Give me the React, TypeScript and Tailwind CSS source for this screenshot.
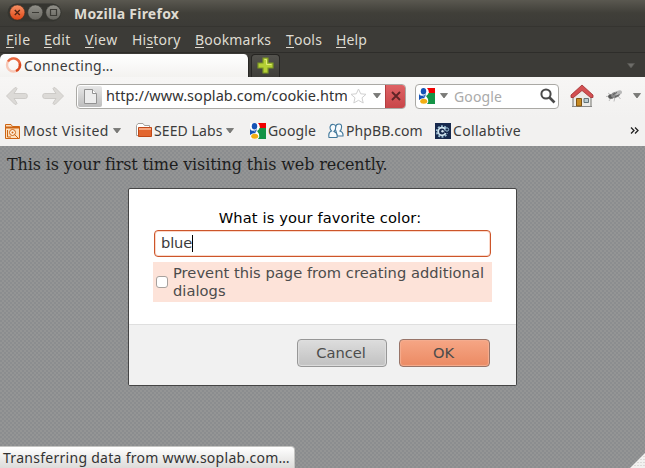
import React from "react";

const UI = "font-['Noto_Sans','Open_Sans',sans-serif]";

function Caret({ className = "", color = "#7b7b79" }: { className?: string; color?: string }) {
  return (
    <svg className={`shrink-0 ${className}`} width="8" height="6" viewBox="0 0 8 6">
      <path d="M0.5 0.5H7.5L4 5Z" fill={color} stroke="#5a5a58" strokeWidth="0.6" />
    </svg>
  );
}

function GoogleIcon({ className = "" }: { className?: string }) {
  return (
    <svg className={`shrink-0 ${className}`} width="16" height="16" viewBox="0 0 16 16">
      <path d="M0 0H16V16H0Z" fill="#fff" />
      <path d="M8 0H16V5H10Q10 2 8 0Z" fill="#f00000" />
      <path d="M16 5V16H8Q10 14 9 11L7 8Q9 7 9.500 5Z" fill="#159447" />
      <path d="M0 5Q0 8 4 8L6 10Q2 10 0 12Z" fill="#1553b5" />
      <ellipse cx="4.500" cy="3.300" rx="2.700" ry="3.200" fill="#1553b5" />
      <path d="M1 7Q5 9 7 6L6 9Z" fill="#1553b5" />
      <ellipse cx="4.700" cy="13.300" rx="3.500" ry="2.500" fill="#f2ae13" />
    </svg>
  );
}

function WindowButtons() {
  return (
    <svg className="shrink-0" width="56" height="22" viewBox="0 0 56 22">
      <defs>
        <linearGradient id="close" x2="0" y2="1">
          <stop stopColor="#f79266" />
          <stop offset="1" stopColor="#df4615" />
        </linearGradient>
        <linearGradient id="grey" x2="0" y2="1">
          <stop stopColor="#92918a" />
          <stop offset="1" stopColor="#66655f" />
        </linearGradient>
      </defs>
      <rect x="0.500" y="1.500" width="54" height="18" rx="9" fill="#353530" />
      <circle cx="10.300" cy="10.500" r="7.500" fill="url(#close)" stroke="#4b2a1c" strokeWidth="0.500" />
      <circle cx="28.300" cy="10.500" r="7.500" fill="url(#grey)" stroke="#30302c" strokeWidth="0.500" />
      <circle cx="46.300" cy="10.500" r="7.500" fill="url(#grey)" stroke="#30302c" strokeWidth="0.500" />
      <path d="M7.800 8L12.800 13M12.800 8L7.800 13" stroke="#512413" strokeWidth="1.400" />
      <path d="M25 10.500H32M43.500 7.500H49.500V13.500H43.500Z" fill="none" stroke="#3b3a35" strokeWidth="1.200" />
    </svg>
  );
}

function MenuItem({ pre = "", k, post, className }: { pre?: string; k: string; post: string; className: string }) {
  return (
    <span className={`shrink-0 whitespace-nowrap ${className}`}>
      {pre}
      <span className="inline-block border-b border-[#dfdbd2] leading-[15px]">{k}</span>
      {post}
    </span>
  );
}

function BackArrow({ className = "" }: { className?: string }) {
  return (
    <svg className={`shrink-0 ${className}`} width="24" height="20" viewBox="0 0 24 20">
      <path
        d="M1.500 10L9.500 2Q11.500 0.800 12 2.500Q12 3.200 9 7.500H20.500Q22.300 7.500 22.300 10Q22.300 12.500 20.500 12.500H9Q12 16.800 12 17.500Q11.500 19.200 9.500 18Z"
        fill="#dcdad7" stroke="#c9c7c4" strokeWidth="0.900"
      />
    </svg>
  );
}

function HomeIcon() {
  return (
    <svg className="ml-[11px] shrink-0" width="24" height="24" viewBox="0 0 24 24">
      <path d="M3 10L12 3L21 10V22.500H3Z" fill="#ecebe8" stroke="#75756f" />
      <path d="M2 22.500H22" stroke="#888" />
      <path d="M6.500 14.500H11.500V22H6.500Z" fill="#c68a22" stroke="#805414" />
      <path d="M14 14.500H18.500V18.500H14Z" fill="#b9cad0" stroke="#63747a" />
      <path d="M12 1L23 11V13.500H20.500L12 6.500L3.500 13.500H1V11Z" fill="#d35052" stroke="#a02f31" strokeWidth="0.800" />
    </svg>
  );
}

function FlyIcon() {
  return (
    <svg className="ml-[12px] shrink-0" width="18" height="16" viewBox="0 0 18 16">
      <path d="M2 5L6 8M0 8.500L6 8M6 8L3 13M9 9L8 13.500M12 8L14.500 11" stroke="#a5a5a5" fill="none" strokeWidth="0.700" />
      <ellipse cx="5" cy="8.500" rx="2.800" ry="2.300" fill="#5a5a5a" />
      <ellipse cx="9.500" cy="6.800" rx="4.500" ry="3" transform="rotate(-20 9.500 6.800)" fill="#8a8a8a" />
      <ellipse cx="12.500" cy="4.800" rx="3.600" ry="2.300" transform="rotate(-20 12.500 4.800)" fill="#b8b8b8" />
      <path d="M7 6.500L11 4.500M9 9L13.500 6.500" stroke="#555" strokeWidth="0.900" />
    </svg>
  );
}

function Chrome() {
  return (
    <header className={`shrink-0 ${UI}`}>
      <div className="flex h-[26px] items-center bg-linear-to-b from-[#5a5850] via-[#403f39] to-[#3c3b37] pl-[7px]">
        <WindowButtons />
        <span className="ml-[11px] text-[14px] font-bold tracking-[0.250px] whitespace-nowrap text-[#dfdbd2]">Mozilla Firefox</span>
      </div>
      <nav className="flex h-[26px] items-center border-t border-[#353430] bg-[#3c3b37] pl-[6px] text-[14px] leading-[20px] tracking-[0.200px] text-[#dfdbd2]">
        <MenuItem k="F" post="ile" className="w-[38px] tracking-[0.600px]" />
        <MenuItem k="E" post="dit" className="w-[41px] tracking-[0.400px]" />
        <MenuItem k="V" post="iew" className="w-[47px] tracking-[0.500px]" />
        <MenuItem pre="Hi" k="s" post="tory" className="w-[63px] tracking-[0.200px]" />
        <MenuItem k="B" post="ookmarks" className="w-[91px]" />
        <MenuItem k="T" post="ools" className="w-[50px]" />
        <MenuItem k="H" post="elp" className="w-[40px] tracking-[0.100px]" />
      </nav>
      <div className="flex h-[25px] border-t border-[#2e2d2a] bg-[#3c3b37]">
        <div className="mt-[1px] flex w-[249px] items-center rounded-t-[5px] border-r border-[#292825] bg-linear-to-b from-white to-[#f3f2f0] pl-[5px]">
          <svg className="shrink-0" width="17" height="17" viewBox="0 0 17 17">
            <circle cx="8.500" cy="8" r="6.500" fill="none" stroke="#f8c8b7" strokeWidth="2.400" />
            <path d="M3 4.500A6.500 6.500 0 0 1 14.500 10.500" fill="none" stroke="#e9683f" strokeWidth="2.400" />
            <path d="M14.800 6.500A6.500 6.500 0 0 1 11 14" fill="none" stroke="#d9481f" strokeWidth="2.400" />
          </svg>
          <span className="ml-[2px] text-[14px] tracking-[0.280px] text-[#3c3c3c]">Connecting…</span>
        </div>
        <div className="mt-[1px] ml-[2px] flex w-[29px] items-center justify-center rounded-t-[4px] border border-b-0 border-[#262522] bg-linear-to-b from-[#54534e] to-[#3f3e39]">
          <svg className="mb-[2px]" width="17" height="17" viewBox="0 0 17 17">
            <path d="M6 1H11V6H16V11H11V16H6V11H1V6H6Z" fill="#b5cf35" stroke="#7b9625" strokeWidth="1.200" />
            <path d="M7.500 2.500H9.500V7.500H14.500" fill="none" stroke="#e0ec79" />
          </svg>
        </div>
        <Caret className="mt-[10px] mr-[10px] ml-auto" color="#6e6d69" />
      </div>
      <div className="flex h-[40px] items-center bg-linear-to-b from-[#f7f6f5] to-[#f2f1f0] pb-[2px] pl-[5px]">
        <BackArrow />
        <BackArrow className="ml-[12px] -scale-x-100" />
        <div className="ml-[11px] flex h-[25px] w-[330px] shrink-0 items-center overflow-hidden rounded-[4px] border border-[#aaa9a5] bg-white">
          <div className="ml-[1px] flex h-[21px] w-[24px] shrink-0 items-center justify-center rounded-[2px] bg-linear-to-b from-[#e7e7e7] to-[#bdbdbd]">
            <svg width="15" height="17" viewBox="0 0 15 17">
              <path d="M1.500 1.500H9.500L13.500 5.500V15.500H1.500Z" fill="#ececec" stroke="#929292" />
              <path d="M9.500 1.500V5.500H13.500" fill="#fff" stroke="#929292" />
            </svg>
          </div>
          <span className="ml-[4px] w-[241px] shrink-0 overflow-hidden text-[14.500px] tracking-[0.050px] whitespace-nowrap text-[#333]">http://www.soplab.com/cookie.htm</span>
          <svg className="ml-[3px] shrink-0" width="17" height="16" viewBox="0 0 17 16">
            <path d="M8.500 1L10.700 5.800L16 6.300L12 9.800L13.200 15L8.500 12.300L3.800 15L5 9.800L1 6.300L6.300 5.800Z" fill="#fff" stroke="#cfcfcf" strokeLinejoin="round" />
          </svg>
          <Caret className="ml-[6px]" />
          <div className="ml-auto flex h-[25px] w-[20px] shrink-0 items-center justify-center border-l border-[#b33e41] bg-linear-to-b from-[#e06366] to-[#c74548]">
            <svg width="10" height="10" viewBox="0 0 10 10">
              <path d="M1 1L9 9M9 1L1 9" stroke="#612426" strokeWidth="1.900" />
            </svg>
          </div>
        </div>
        <div className="ml-[9px] flex h-[25px] w-[144px] shrink-0 items-center rounded-[4px] border border-[#aaa9a5] bg-white pl-[3px]">
          <GoogleIcon />
          <Caret className="ml-[5px]" />
          <span className="ml-[6px] text-[14px] tracking-[0.150px] text-[#aaa]">Google</span>
          <svg className="mr-[2px] ml-auto" width="16" height="16" viewBox="0 0 16 16">
            <circle cx="6" cy="6" r="4.600" fill="none" stroke="#4a4a4a" strokeWidth="2" />
            <path d="M9.500 9.500L14.500 14.500" stroke="#4a4a4a" strokeWidth="2.600" />
          </svg>
        </div>
        <HomeIcon />
        <FlyIcon />
        <Caret className="ml-[9px]" />
      </div>
      <div className="flex h-[29px] items-center bg-[#f2f1f0] pb-[2px] pl-[5px] text-[14px] whitespace-nowrap text-[#3c3c3c]">
        <svg className="shrink-0" width="16" height="16" viewBox="0 0 16 16">
          <path d="M0.500 1.500H6L7.500 3.500H14.500V15.500H0.500Z" fill="#fce0bd" stroke="#ce6413" />
          <path d="M0.500 4.500H14.500" stroke="#ce6413" strokeWidth="2" />
          <circle cx="7.500" cy="9.500" r="3" fill="#fff2df" stroke="#ce6413" />
          <circle cx="7.500" cy="9.500" r="1" fill="#ce6413" />
          <path d="M9.500 11.500L13 15M2.500 7V14H6" fill="none" stroke="#ce6413" />
        </svg>
        <span className="ml-[2px] w-[90px] shrink-0 tracking-[0.450px]">Most Visited</span>
        <Caret />
        <svg className="ml-[15px] shrink-0" width="17" height="15" viewBox="0 0 17 15">
          <path d="M0.500 12.500V2.500L2 0.500H7L8.500 2.500H13.500V5H3V12.500Z" fill="#fff" stroke="#a4a19d" />
          <path d="M2.500 4.500H15.500V13.500H2.500Z" fill="#e2662f" stroke="#c14817" />
          <path d="M3 6H15" stroke="#f7a67e" strokeWidth="2" />
        </svg>
        <span className="ml-[1px] w-[72px] shrink-0 tracking-[0.100px]">SEED Labs</span>
        <Caret />
        <GoogleIcon className="ml-[16px]" />
        <span className="ml-[2px] w-[60px] shrink-0 tracking-[0.150px]">Google</span>
        <svg className="shrink-0" width="16" height="16" viewBox="0 0 16 16">
          <g fill="#f8fbfd" stroke="#42799c" strokeWidth="1.100">
            <path d="M8 8Q7 6.500 7.500 4Q8 1 11 1Q14 1 13.500 4.500Q13.500 6.500 12 8Q15.500 9 15 13H9Z" />
            <path d="M3.500 8Q1.500 6 2.200 3.500Q3 1 5.500 1.500Q8.500 2 7.500 5.500Q7.500 7 6 8.500Q10 10 9 14.500H1Q0 9 3.500 8Z" />
          </g>
        </svg>
        <span className="ml-[2px] w-[89px] shrink-0 tracking-[0.100px]">PhpBB.com</span>
        <svg className="shrink-0" width="16" height="16" viewBox="0 0 16 16">
          <path d="M0 0H16V16H0Z" fill="#17294d" />
          <circle cx="7" cy="8.500" r="5.300" fill="none" stroke="#9bc0d5" strokeWidth="1.800" strokeDasharray="1.900 1.430" />
          <circle cx="7" cy="8.500" r="3.800" fill="none" stroke="#d1e4ee" strokeWidth="1.800" />
          <circle cx="7.500" cy="8.300" r="1.200" fill="#d1e4ee" />
          <path d="M10 6H16V10H10Z" fill="#17294d" />
          <circle cx="12" cy="6.500" r="1.700" fill="none" stroke="#9bc0d5" />
        </svg>
        <span className="ml-[2px] tracking-[0.330px]">Collabtive</span>
        <svg className="mr-[6px] ml-auto" width="9" height="7" viewBox="0 0 9 7">
          <path d="M1 0.500L4 3.500L1 6.500M5 0.500L8 3.500L5 6.500" fill="none" stroke="#222" strokeWidth="1.300" />
        </svg>
      </div>
    </header>
  );
}

function Dialog() {
  return (
    <div className="absolute top-[42px] left-[128px] flex h-[198px] w-[389px] flex-col overflow-hidden rounded-[2px] border border-[#454545] bg-white font-['DejaVu_Sans',sans-serif] text-[14.667px]">
      <div className="flex h-[135px] flex-col px-[24px] pt-[20px]">
        <p className="h-[21px] pr-[5px] text-center leading-[18px] tracking-[0.120px] whitespace-nowrap text-black">What is your favorite color:</p>
        <div className="mx-[1px] flex h-[27px] shrink-0 items-center rounded-[4px] border border-[#cc552a] bg-white pb-[1px] pl-[6px] text-[#3c3c3c] shadow-[inset_0_0_0_1px_#fbd8c9]">
          <span className="tracking-[-0.150px]">blue</span>
          <i className="h-[17px] w-px bg-black" />
        </div>
        <label className="mt-[5px] flex h-[40px] shrink-0 items-center bg-[#fde3d9] pl-[3px] leading-[18px] tracking-[0.030px] text-[#4c4c4c]">
          <i className="h-[12px] w-[12px] shrink-0 rounded-[3px] border border-[#a7a19d] bg-white" />
          <span className="ml-[5px] whitespace-nowrap">
            Prevent this page from creating additional
            <br />
            dialogs
          </span>
        </label>
      </div>
      <div className="flex grow justify-end gap-[12px] border-t border-[#dfdfdf] bg-[#f1f1f1] pt-[14px] pr-[26px] text-[#4c4c4c]">
        <button className="h-[28px] w-[90px] rounded-[4px] border border-[#979797] bg-linear-to-b from-[#dddddd] to-[#c1c1c1] pr-[2px] shadow-[inset_0_0_1px_1px_#dedede]">Cancel</button>
        <button className="h-[28px] w-[91px] rounded-[4px] border border-[#987468] bg-linear-to-b from-[#f6a685] to-[#eb8a63] pr-[2px] shadow-[inset_0_0_1px_1px_#f5ad8f]">OK</button>
      </div>
    </div>
  );
}

export default function App() {
  return (
    <div className="flex h-[468px] w-[645px] flex-col overflow-hidden bg-[#f2f1f0]">
      <Chrome />
      <main className="relative grow overflow-hidden bg-[#919293] bg-[conic-gradient(#8b8d8f_25%,#949595_0_50%,#8b8d8f_0_75%,#949595_0)] bg-[length:4px_4px]">
        <p className="pt-[7px] pl-[7px] font-['DejaVu_Serif',serif] text-[16px] leading-[24px] tracking-[-0.125px] whitespace-nowrap text-[#1d1d1d]">This is your first time visiting this web recently.</p>
        <Dialog />
        <div className={`absolute bottom-0 left-0 flex h-[22px] w-[295px] items-center rounded-tr-[4px] border-t border-r border-[#c4c4c2] bg-linear-to-b from-white to-[#dddcda] pl-[3px] text-[14px] tracking-[0.280px] whitespace-nowrap text-[#333] ${UI}`}>
          Transferring data from www.soplab.com…
        </div>
        <svg className="absolute right-0 bottom-0" width="15" height="15" viewBox="0 0 15 15">
          <path d="M15 0V15H0Z" fill="#f2f1f0" />
          <path d="M14 3V15M11 6V15M8 9V15M5 12V15" stroke="#c5c4c1" strokeDasharray="1 2" />
        </svg>
      </main>
    </div>
  );
}
